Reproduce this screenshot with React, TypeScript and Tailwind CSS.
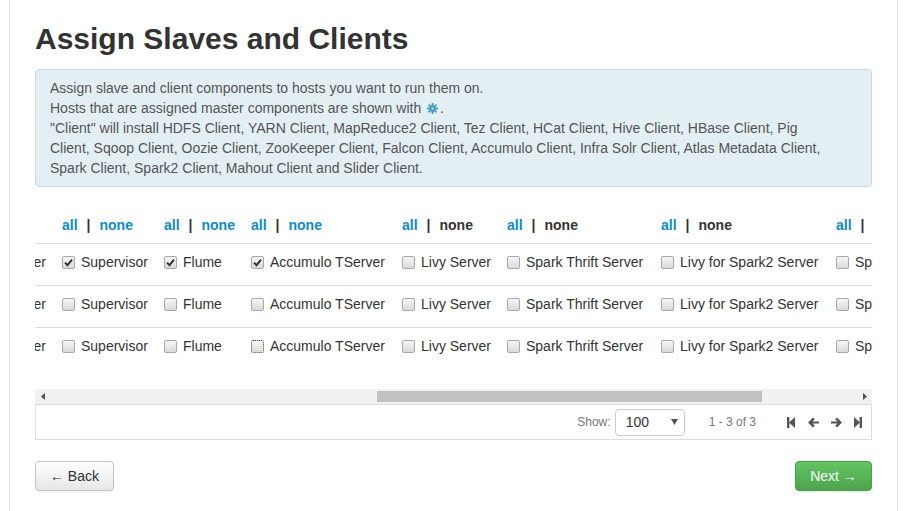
import type { ReactNode } from "react";

type Column = {
	label: string;
	width: string;
	noneLink: boolean;
};

const columns: Column[] = [
	{ label: "RegionServer", width: "w-[121px]", noneLink: true },
	{ label: "Supervisor", width: "w-[102px]", noneLink: true },
	{ label: "Flume", width: "w-[87px]", noneLink: true },
	{ label: "Accumulo TServer", width: "w-[151px]", noneLink: true },
	{ label: "Livy Server", width: "w-[105px]", noneLink: false },
	{ label: "Spark Thrift Server", width: "w-[154px]", noneLink: false },
	{ label: "Livy for Spark2 Server", width: "w-[175px]", noneLink: false },
	{ label: "Spark2 Thrift Server", width: "w-[170px]", noneLink: false },
];

const rows = [
	{ checked: [1, 2, 3], focus: -1 },
	{ checked: [], focus: -1 },
	{ checked: [], focus: 3 },
];

function CheckBox({ checked, focus }: { checked?: boolean; focus?: boolean }) {
	return (
		<span
			className={`flex h-[13px] w-[13px] shrink-0 items-center justify-center rounded-[2px] border bg-linear-to-b from-[#f6f6f6] to-[#dadada] ${
				focus ? "border-dotted border-[#444]" : "border-[#a8a8a8]"
			}`}
		>
			{checked && (
				<svg width="9" height="9" viewBox="0 0 9 9">
					<path d="M1 4.6 L3.5 7.2 L8 1.6" fill="none" stroke="#333" strokeWidth="1.9" />
				</svg>
			)}
		</span>
	);
}

function Cog() {
	return (
		<svg width="11" height="11" viewBox="0 0 12 12" className="mx-[2px] inline-block align-[-1px]">
			<g fill="#3d9ccc">
				<circle cx="6" cy="6" r="3.4" />
				{[0, 45, 90, 135].map((a) => (
					<rect key={a} x="5" y="0" width="2" height="12" transform={`rotate(${a} 6 6)`} />
				))}
			</g>
			<circle cx="6" cy="6" r="1.2" fill="#e4eef4" />
		</svg>
	);
}

function Icon({ children, width, className }: { children: ReactNode; width: number; className?: string }) {
	return (
		<svg width={width} height="11" viewBox={`0 0 ${width} 11`} className={className}>
			<g fill="#555">{children}</g>
		</svg>
	);
}

export default function App() {
	return (
		<div className="min-h-[511px] bg-white font-['Liberation_Sans',Arial,sans-serif] text-[#333]">
			<div className="ml-[9px] min-h-[511px] w-[889px] border-x border-[#e3e3e3] pb-5 pl-[25px] pr-[25px] pt-[22px]">
				<h2 className="text-[30px] font-bold leading-[33px] text-[#333]">Assign Slaves and Clients</h2>

				<div className="mt-[14px] rounded-[4px] border border-[#c9dce5] bg-[#e4eff4] py-2 pl-[14px] pr-[35px] text-sm leading-5 text-[#555]">
					Assign slave and client components to hosts you want to run them on.
					<br />
					Hosts that are assigned master components are shown with <Cog />.
					<br />
					"Client" will install HDFS Client, YARN Client, MapReduce2 Client, Tez Client, HCat Client, Hive Client, HBase Client, Pig
					<br />
					Client, Sqoop Client, Oozie Client, ZooKeeper Client, Falcon Client, Accumulo Client, Infra Solr Client, Atlas Metadata Client,
					<br />
					Spark Client, Spark2 Client, Mahout Client and Slider Client.
				</div>

				<div className="mt-5 overflow-hidden">
					<div className="-ml-[102px] w-max">
						<div className="flex">
							{columns.map((col, c) => (
								<div key={col.label} className={`${col.width} h-9 shrink-0 px-2 py-2 text-sm font-bold leading-5`}>
									{c > 0 && (
										<>
											<span className="text-[#0a8bd3]">all</span>
											<span className="mx-[9px] text-[#333]">|</span>
											<span className={col.noneLink ? "text-[#0a8bd3]" : "text-[#333]"}>none</span>
										</>
									)}
								</div>
							))}
						</div>
						{rows.map((row, r) => (
							<div key={r} className="flex h-[42px] border-t border-[#dddddd]">
								{columns.map((col, c) => (
									<div
										key={col.label}
										className={`${col.width} flex shrink-0 items-center gap-[6px] self-start whitespace-nowrap px-2 pt-2 text-sm leading-5 ${
											c === 0 ? "justify-end" : ""
										}`}
									>
										<CheckBox checked={row.checked.includes(c)} focus={row.focus === c} />
										<span>{col.label}</span>
									</div>
								))}
							</div>
						))}
					</div>
				</div>

				<div className="mt-5 flex h-[15px] items-center bg-[#f1f1f1]">
					<span className="flex w-[15px] justify-center">
						<svg width="4" height="7" viewBox="0 0 4 7">
							<path d="M4 0 L0 3.5 L4 7 Z" fill="#505050" />
						</svg>
					</span>
					<span className="ml-[327px] h-[11px] w-[385px] bg-[#c1c1c1]" />
					<span className="ml-auto flex w-[15px] justify-center">
						<svg width="4" height="7" viewBox="0 0 4 7">
							<path d="M0 0 L4 3.5 L0 7 Z" fill="#505050" />
						</svg>
					</span>
				</div>

				<div className="flex h-[36px] items-center justify-end border border-[#dddddd] pr-[9px] text-xs text-[#777]">
					<span>Show:</span>
					<div className="ml-1 flex h-[27px] w-[70px] items-center justify-between rounded-[4px] border border-[#cccccc] bg-white pl-[10px] pr-[6px] text-sm text-[#333]">
						<span>100</span>
						<svg width="7" height="6" viewBox="0 0 7 6">
							<path d="M0 0 H7 L3.5 6 Z" fill="#555" />
						</svg>
					</div>
					<span className="ml-6">1 - 3 of 3</span>
					<Icon width={8} className="ml-[31px]">
						<rect x="0" y="0" width="2.4" height="11" />
						<path d="M8 0 V11 L2 5.5 Z" />
					</Icon>
					<Icon width={11} className="ml-[13px]">
						<path d="M0 5.5 L5 0.5 L6.8 2.3 L4.6 4.4 H11 V6.6 H4.6 L6.8 8.7 L5 10.5 Z" />
					</Icon>
					<Icon width={11} className="ml-[12px]">
						<path d="M11 5.5 L6 0.5 L4.2 2.3 L6.4 4.4 H0 V6.6 H6.4 L4.2 8.7 L6 10.5 Z" />
					</Icon>
					<Icon width={8} className="ml-[12px]">
						<path d="M0 0 V11 L6 5.5 Z" />
						<rect x="5.6" y="0" width="2.4" height="11" />
					</Icon>
				</div>

				<div className="mt-[21px] flex justify-between">
					<button className="h-[30px] w-[79px] rounded-[4px] border border-[#c5c5c5] bg-linear-to-b from-white to-[#e6e6e6] text-sm text-[#333] shadow-[0_1px_2px_rgba(0,0,0,0.08)]">
						← Back
					</button>
					<button className="h-[30px] w-[77px] rounded-[4px] border border-[#46a046] bg-linear-to-b from-[#62c462] to-[#4da54d] text-sm text-white shadow-[0_1px_2px_rgba(0,0,0,0.1)]">
						Next →
					</button>
				</div>
			</div>
		</div>
	);
}
